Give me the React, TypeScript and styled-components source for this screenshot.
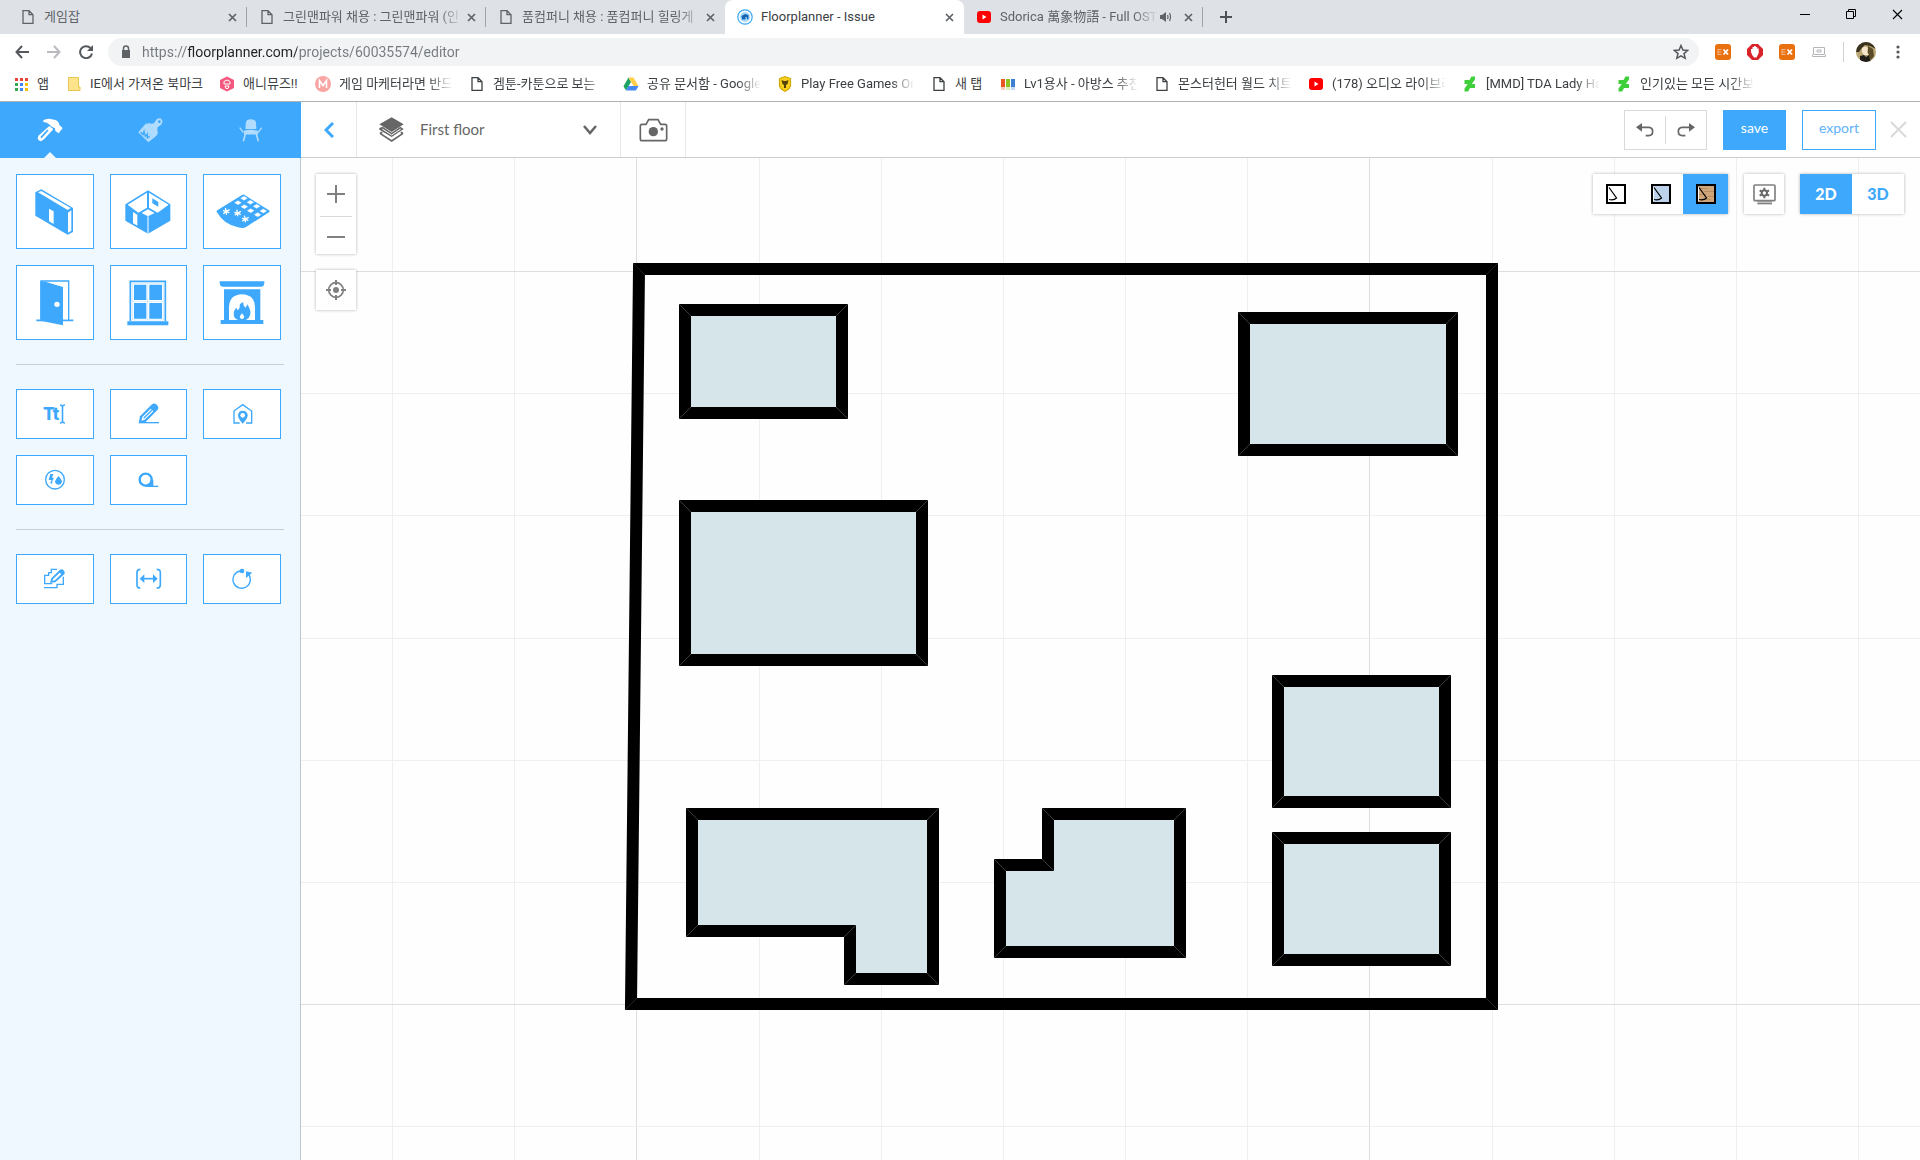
import React from "react";
import styled, { createGlobalStyle } from "styled-components";

const BLUE = "#3da8fc";
const UI_FONT = 'Roboto, "Noto Sans CJK KR", "Noto Sans CJK TC", sans-serif';
const APP_FONT = 'Lato, "Liberation Sans", sans-serif';

const GlobalStyle = createGlobalStyle`
  *, *::before, *::after { box-sizing: border-box; }
  body { margin: 0; background: #fff; font-family: ${UI_FONT}; }
  button, input, select { font: inherit; margin: 0; padding: 0; border: 0; background: none; color: inherit; }
  button, select { cursor: pointer; }
  svg { display: block; flex: none; }
`;

const Page = styled.div`
  display: flex;
  flex-direction: column;
  min-height: 100vh;
`;

/* ---------- browser chrome ---------- */

const TabStrip = styled.header`
  display: flex;
  height: 34px;
  padding-left: 8px;
  background: #dee1e6;
`;

const Tab = styled.div<{ $active?: boolean; $divider?: boolean }>`
  display: flex;
  align-items: center;
  flex: 0 1 239px;
  min-width: 0;
  height: 34px;
  padding: 0 7px 0 12px;
  font-size: 13px;
  color: ${(p) => (p.$active ? "#3c4043" : "#5f6368")};
  background: ${(p) => (p.$active ? "#fff" : "transparent")};
  border-radius: 8px 8px 0 0;
  background-image: ${(p) => (p.$divider ? "linear-gradient(#a0a3a8, #a0a3a8)" : "none")};
  background-size: 1px 20px;
  background-position: right center;
  background-repeat: no-repeat;
`;

const Favicon = styled.span`
  display: grid;
  place-items: center;
  flex: none;
  width: 16px;
  height: 16px;
`;

const Fading = styled.span<{ $fade?: boolean }>`
  flex: 1;
  min-width: 0;
  white-space: nowrap;
  line-height: 20px;
  mask-image: ${(p) => (p.$fade ? "linear-gradient(to left, transparent, #000 24px)" : "none")};
`;

const TabTitle = styled(Fading)`
  margin-left: 8px;
`;

const TabClose = styled.button`
  display: grid;
  place-items: center;
  flex: none;
  width: 16px;
  height: 16px;
  color: #5f6368;
  & + & { margin-left: 6px; }
`;

const NewTab = styled.button`
  display: grid;
  place-items: center;
  width: 46px;
  height: 34px;
  color: #4d5156;
`;

const WindowControls = styled.div`
  display: flex;
  margin-left: auto;
`;

const WindowButton = styled.button`
  display: grid;
  place-items: center;
  width: 46px;
  height: 28px;
  color: #000;
`;

const Toolbar = styled.nav`
  display: flex;
  align-items: center;
  height: 36px;
  padding: 0 6px;
`;

const NavButton = styled.button<{ $muted?: boolean }>`
  display: grid;
  place-items: center;
  flex: none;
  width: 32px;
  height: 32px;
  color: ${(p) => (p.$muted ? "#b8babd" : "#55595e")};
`;

const AddressBar = styled.div`
  display: flex;
  align-items: center;
  flex: 1;
  height: 28px;
  margin: 0 8px 0 6px;
  padding: 0 2px 0 12px;
  border-radius: 14px;
  background: #f1f3f4;
  color: #5f6368;
`;

const AddressInput = styled.input`
  flex: 1;
  min-width: 0;
  height: 28px;
  margin-left: 10px;
  outline: 0;
  font-size: 14px;
  color: transparent;
  background: linear-gradient(to right, #75797e 46px, #202124 46px, #202124 155px, #75797e 155px);
  background-clip: text;
  -webkit-background-clip: text;
`;

const ToolbarDivider = styled.span`
  width: 1px;
  height: 20px;
  margin: 0 6px 0 8px;
  background: #cfd1d4;
`;

const Bookmarks = styled.nav`
  display: flex;
  align-items: center;
  gap: 16px;
  height: 32px;
  padding: 0 12px 4px 13px;
  border-bottom: 1px solid #b0b2b4;
`;

const Bookmark = styled.a<{ $width: number }>`
  display: flex;
  align-items: center;
  gap: 8px;
  flex: 0 1 ${(p) => p.$width + 24}px;
  min-width: 0;
  color: #3c4043;
  font-size: 13px;
  text-decoration: none;
`;

/* ---------- application ---------- */

const AppShell = styled.div`
  display: flex;
  flex: 1;
`;

const Sidebar = styled.aside`
  display: flex;
  flex-direction: column;
  flex: none;
  width: 301px;
  background: #eff7ff;
`;

const SidebarTabs = styled.div`
  display: grid;
  grid-template-columns: repeat(3, 1fr);
  height: 56px;
  background: ${BLUE};
`;

const SidebarTab = styled.button<{ $active?: boolean }>`
  display: grid;
  place-items: center;
  position: relative;
  color: ${(p) => (p.$active ? "#fff" : "#b1dcfe")};
  &::after {
    content: "";
    display: ${(p) => (p.$active ? "block" : "none")};
    position: absolute;
    bottom: 0;
    left: calc(50% - 6px);
    border: 6px solid transparent;
    border-top: 0;
    border-bottom-color: #eff7ff;
  }
`;

const SidebarBody = styled.div`
  display: flex;
  flex-direction: column;
  gap: 24px;
  flex: 1;
  padding: 16px;
  border-right: 1px solid #bcc4cc;
`;

const ToolGrid = styled.div`
  display: grid;
  grid-template-columns: repeat(3, 1fr);
  gap: 16px;
  padding-right: 3px;
`;

const Tool = styled.button<{ $large?: boolean }>`
  display: grid;
  place-items: center;
  height: ${(p) => (p.$large ? 75 : 50)}px;
  border: 1px solid ${BLUE};
  background: #fff;
  color: ${BLUE};
`;

const Rule = styled.hr`
  width: 100%;
  height: 1px;
  margin: 0;
  border: 0;
  background: #c6ced6;
`;

const Main = styled.main`
  display: flex;
  flex-direction: column;
  flex: 1;
  min-width: 0;
`;

const TopBar = styled.div`
  display: flex;
  align-items: center;
  height: 56px;
  padding-right: 8px;
  border-bottom: 1px solid #cfcfcf;
  font-family: ${APP_FONT};
  background: #fff;
`;

const TopCell = styled.button<{ $width: number }>`
  display: grid;
  place-items: center;
  width: ${(p) => p.$width}px;
  height: 55px;
  border-right: 1px solid #e8e8e8;
  color: #666;
`;

const FloorPicker = styled.label`
  display: grid;
  grid-template-columns: 25px 1fr 16px;
  align-items: center;
  column-gap: 16px;
  width: 264px;
  height: 55px;
  padding: 0 22px;
  border-right: 1px solid #e8e8e8;
  color: #666;
`;

const FloorSelect = styled.select`
  grid-column: 2 / 4;
  grid-row: 1;
  height: 40px;
  padding-bottom: 2px;
  appearance: none;
  outline: 0;
  font-size: 15px;
  color: #666;
`;

const Chevron = styled.svg`
  grid-column: 3;
  grid-row: 1;
  pointer-events: none;
`;

const Actions = styled.div`
  display: flex;
  align-items: center;
  gap: 16px;
  margin-left: auto;
`;

const History = styled.div`
  display: flex;
  align-items: center;
  width: 83px;
  height: 40px;
  border: 1px solid #d9d9d9;
  color: #666;
`;

const HistoryButton = styled.button`
  display: grid;
  place-items: center;
  flex: 1;
  height: 28px;
  & + & { border-left: 1px solid #d9d9d9; }
`;

const ActionButton = styled.button<{ $width: number; $primary?: boolean }>`
  width: ${(p) => p.$width}px;
  height: 40px;
  padding-bottom: 4px;
  border: 1px solid ${BLUE};
  background: ${(p) => (p.$primary ? BLUE : "#fff")};
  color: ${(p) => (p.$primary ? "#fff" : "#62b2fb")};
  font-size: 14px;
  line-height: 20px;
`;

const CloseButton = styled.button`
  display: grid;
  place-items: center;
  width: 28px;
  height: 40px;
  margin-left: -8px;
  color: #d9d9d9;
`;

const Canvas = styled.section`
  position: relative;
  flex: 1;
  overflow: hidden;
  background: #fefefe;
`;

const Plan = styled.svg`
  position: absolute;
  inset: 0;
  width: 100%;
  height: 100%;
`;

const Overlay = styled.div`
  display: flex;
  justify-content: space-between;
  align-items: flex-start;
  position: relative;
  padding: 16px 16px 0 15px;
  font-family: ${APP_FONT};
`;

const Stack = styled.div`
  display: flex;
  flex-direction: column;
  gap: 16px;
`;

const Row = styled.div`
  display: flex;
  gap: 16px;
`;

const Panel = styled.div<{ $vertical?: boolean }>`
  display: flex;
  flex-direction: ${(p) => (p.$vertical ? "column" : "row")};
  align-items: center;
  gap: ${(p) => (p.$vertical ? 2 : 0)}px;
  background: #fff;
  box-shadow: 0 0 3px rgba(0, 0, 0, 0.3);
`;

const PanelButton = styled.button<{ $width?: number; $active?: boolean }>`
  display: grid;
  place-items: center;
  width: ${(p) => p.$width ?? 40}px;
  height: 40px;
  background: ${(p) => (p.$active ? BLUE : "#fff")};
  color: #808080;
`;

const ZoomButton = styled(PanelButton)`
  & + & {
    width: 32px;
    height: 38px;
    padding-top: 2px;
    border-top: 1px solid #d9d9d9;
  }
`;

const DimensionButton = styled(PanelButton)`
  color: ${(p) => (p.$active ? "#fff" : BLUE)};
  padding-bottom: 2px;
  font-size: 16px;
  font-weight: 900;
`;

/* ---------- icons ---------- */

/* Artwork is drawn on a grid of three units to the pixel. */
type ArtProps = { box: [number, number, number, number]; children: React.ReactNode };
const Art = ({ box, children }: ArtProps) => (
  <svg
    width={Math.round(box[2] / 3)}
    height={Math.round(box[3] / 3)}
    viewBox={box.join(" ")}
    fill="currentColor"
    aria-hidden="true"
  >
    {children}
  </svg>
);

const line = (width: number) => ({ fill: "none", stroke: "currentColor", strokeWidth: width });

const Cross = ({ size, weight }: { size: number; weight: number }) => (
  <svg width={size} height={size} viewBox={`0 0 ${size} ${size}`} {...line(weight)} aria-hidden="true">
    <path d={`M1 1 L${size - 1} ${size - 1} M${size - 1} 1 L1 ${size - 1}`} />
  </svg>
);

const DocIcon = () => (
  <svg width="12" height="16" viewBox="0 0 12 16" {...line(1.3)} aria-hidden="true">
    <path d="M1 1.7 H7 L11 5.7 V14.3 H1 Z M7 1.7 V5.7 H11" />
  </svg>
);

const YoutubeIcon = () => (
  <svg width="16" height="14" viewBox="0 0 16 14" aria-hidden="true">
    <rect x="1" y="1" width="14" height="12" rx="3" fill="#f00" />
    <path d="M6.5 4.5 L10.5 7 L6.5 9.5Z" fill="#fff" />
  </svg>
);

const FloorplannerIcon = () => (
  <svg width="16" height="16" viewBox="0 0 16 16" aria-hidden="true">
    <circle cx="8" cy="8" r="7.2" fill="#fff" stroke="#35a5f5" strokeWidth="1.2" />
    <circle cx="8" cy="8" r="5" fill="#a9d8fb" />
    <path d="M4.5 7 L8 5 L11.5 6 V10 L10 10.5 V8.5 L8.5 8 V10.5 H5Z" fill="#1465b4" />
  </svg>
);

const AppsIcon = () => {
  const colors = ["#ea4335", "#ea4335", "#ea4335", "#34a853", "#4285f4", "#fbbc05", "#34a853", "#4285f4", "#fbbc05"];
  return (
    <svg width="16" height="14" viewBox="0 0 16 14" aria-hidden="true">
      {colors.map((c, i) => (
        <rect key={i} x={2 + (i % 3) * 5} y={1 + Math.floor(i / 3) * 5} width="3" height="3" fill={c} />
      ))}
    </svg>
  );
};

const FolderIcon = () => (
  <svg width="14" height="16" viewBox="0 0 14 16" aria-hidden="true">
    <path d="M1.5 1.5 H11.5 V11 H13 V14.5 H1.5Z" fill="#fde38b" stroke="#e9c64d" />
  </svg>
);

const AnimuseIcon = () => (
  <svg width="16" height="16" viewBox="0 0 16 16" aria-hidden="true">
    <path d="M8 0.5 L15 4 V12 L8 15.5 L1 12 V4Z" fill="#f4587e" />
    <path d="M5 5.5 Q8 2.5 11 5.5 V8 H5Z M6 10 H10 L9 12.5 H7Z" fill="none" stroke="#fff" />
  </svg>
);

const MIcon = () => (
  <svg width="16" height="16" viewBox="0 0 16 16" aria-hidden="true">
    <circle cx="8" cy="8" r="8" fill="#f9a5a3" />
    <path d="M4.5 12 V4.5 L8 9.5 L11.5 4.5 V12" fill="none" stroke="#fff" strokeWidth="1.6" />
  </svg>
);

const DriveIcon = () => (
  <svg width="16" height="14" viewBox="0 0 16 14" aria-hidden="true">
    <path d="M5.5 0.5 L8 5 L3 13.5 L0.5 9.2Z" fill="#1da362" />
    <path d="M5.5 0.5 H10.5 L15.5 9 H10.5Z" fill="#ffcf48" />
    <path d="M5.5 9 H15.5 L13 13.5 H3Z" fill="#4587f4" />
  </svg>
);

const ShieldIcon = () => (
  <svg width="14" height="16" viewBox="0 0 14 16" aria-hidden="true">
    <path d="M7 0.6 L12.6 2.5 V10 Q12 13.5 7 15.5 Q2 13.5 1.4 10 V2.5Z" fill="#f7cf1c" stroke="#c9a100" />
    <path d="M3.5 4 L6 5 H8 L10.5 4 L9.5 8 L8 9 V12 H6 V9 L4.5 8Z" fill="#54440a" />
  </svg>
);

const BarsIcon = () => (
  <svg width="14" height="14" viewBox="0 0 14 14" aria-hidden="true">
    <path d="M0 2 H4 V10 H0Z" fill="#ea5520" />
    <path d="M5 2 H9 V10 H5Z" fill="#8fc31f" />
    <path d="M10 2 H14 V10 H10Z" fill="#3d7fd0" />
    <path d="M0 10 H4 V13 H0Z" fill="#f8cdbc" />
    <path d="M5 10 H9 V13 H5Z" fill="#ddedbc" />
    <path d="M10 10 H14 V13 H10Z" fill="#c5d9f1" />
  </svg>
);

const DeviantIcon = () => (
  <svg width="12" height="16" viewBox="0 0 12 16" aria-hidden="true">
    <path d="M11 0.5 V3.5 L7.8 8 H11 V12 H6 L4.2 15.5 H0.5 V12.5 L3.8 8 H0.5 V4 H5.5 L7.5 0.5Z" fill="#3fcf3a" />
  </svg>
);

const SpeakerIcon = () => (
  <svg width="12" height="10" viewBox="0 0 12 10" aria-hidden="true" fill="currentColor">
    <path d="M0 3 H2 L6 0 V10 L2 7 H0Z" />
    <path d="M7.5 3 Q8.5 5 7.5 7 M9.5 1 Q11.5 5 9.5 9" {...line(1.2)} />
  </svg>
);

const ExtensionIcon = () => (
  <svg width="16" height="16" viewBox="0 0 16 16" aria-hidden="true">
    <rect width="16" height="16" rx="3" fill="#e8700f" />
    <path d="M3 5.5 H6.5 M3 8 H6.5 M3 10.5 H6.5 M3 5 V11" fill="none" stroke="#f3b98a" />
    <path d="M8.5 5.5 L13 10.5 M13 5.5 L8.5 10.5" fill="none" stroke="#fff" strokeWidth="1.8" />
  </svg>
);

const BlockIcon = () => (
  <svg width="16" height="16" viewBox="0 0 16 16" aria-hidden="true">
    <path d="M5 0 H11 L16 5 V11 L11 16 H5 L0 11 V5Z" fill="#d9232b" />
    <path d="M4 8 V5 H5.5 V3 H7 V2 H8.7 V3 H10.2 V4.5 H11.7 V9 L9.5 13.5 H7 Q5 11.5 4 8Z" fill="#fff" />
  </svg>
);

const LaptopIcon = () => (
  <svg width="14" height="12" viewBox="0 0 14 12" {...line(1)} aria-hidden="true" color="#b4b6b9">
    <path d="M1.5 1.5 H12.5 V8.5 H1.5Z M0.5 10.5 H13.5 M5 4 H9 V6 H5Z M0.5 8.5 V10.5 M13.5 8.5 V10.5" />
  </svg>
);

const Avatar = () => (
  <svg width="20" height="20" viewBox="0 0 20 20" aria-hidden="true">
    <clipPath id="avatar-clip"><circle cx="10" cy="10" r="10" /></clipPath>
    <g clipPath="url(#avatar-clip)">
      <rect width="20" height="20" fill="#b9a672" />
      <path d="M0 0 H20 V7 L14 4 L9 3 L5 7 L3 10 L0 10Z" fill="#3a3220" />
      <path d="M12 4 L17 7 L18 14 L15 18 L12 12Z" fill="#5c4b28" />
      <path d="M6 6 Q9 3 12 6 L11 10 L13 13 L8 13 L6 10Z" fill="#f6e6cd" />
      <path d="M4 20 L4 14 L8 13 L10 15 L13 13 L15 20Z" fill="#201c18" />
    </g>
  </svg>
);

const HammerIcon = () => (
  <Art box={[112, 54, 78, 72]}>
    <path d="M131 61 Q140 55 152 57 L168 60 Q178 65 179 75 L189 84 L177 100 L167 93 L166 85 L156 80 L150 74 Q143 66 131 66Z" />
    <path d="M149 78 L161 88 L133 118 Q124 127 117 121 Q111 114 118 106Z" />
    <path d="M145 90 L124 113" fill="none" stroke={BLUE} strokeWidth="5" />
  </Art>
);

const BrushIcon = () => (
  <Art box={[415, 53, 75, 75]}>
    <path d="M429 80 L440 69 L474 102 L462 114Z" />
    <path d="M445 68 Q457 72 463 69 L471 57 Q480 50 487 58 Q491 66 484 73 L474 81 Q471 91 476 97 L471 101 L443 72Z" />
    <path d="M429 80 L462 113 L446 126 L416 96Z" />
    <path d="M423 95 L430 103 L433 93 L437 108 L443 101 L443 113 L450 108" fill="none" stroke={BLUE} strokeWidth="4" />
    <circle cx="479" cy="64" r="4" fill={BLUE} />
  </Art>
);

const ChairIcon = () => (
  <Art box={[716, 56, 72, 69]}>
    <path d="M735 86 L737 65 Q739 57 751 57 Q764 57 767 65 L768 86Z" />
    <path d="M729 92 Q751 85 774 92 L772 101 H732Z" />
    <path d="M718 82 L729 96 M784 82 L774 96" {...line(4)} />
    <path d="M735 101 L729 123 M768 101 L774 123" {...line(5)} />
    <path d="M731 100 H772" {...line(5)} />
  </Art>
);

const WallIcon = () => (
  <Art box={[105, 265, 120, 138]}>
    <path d="M106 275 L124 266 L219 322 V394 L203 402 L106 345Z" />
    <path d="M114 275 L124 271 L212 322 L203 328Z M204 336 L214 329 V390 L204 396Z M147 324 L161 332 V370 L147 362Z" fill="#fff" />
  </Art>
);

const RoomIcon = () => (
  <Art box={[377, 268, 138, 132]}>
    <path d="M446 269 L513 311 V360 L446 399 L378 360 V311Z" />
    <path d="M443 276 V321 L417 336 L385 312Z M449 276 V321 L475 336 L508 312Z M446 326 L466 337 L446 347 L427 337Z M401 334 L414 342 V375 L401 368Z" fill="#fff" />
    <path d="M446 347 V400" fill="none" stroke="#fff" strokeWidth="3" />
    <path d="M459 293 L477 304 V318 L459 308Z" />
  </Art>
);

const TILES = [[732, 297], [751, 309], [770, 321], [790, 335], [714, 310], [733, 322], [752, 334], [773, 346]];
const LEAVES = [[679, 336], [713, 341], [736, 359]];

const FloorIcon = () => (
  <Art box={[645, 284, 165, 105]}>
    <path d="M726 287 Q730 284 734 287 L807 333 Q811 336 807 339 L738 383 Q730 388 714 384 Q672 376 651 339 Q648 336 652 333Z" />
    {TILES.map(([x, y]) => (
      <path key={`${x}-${y}`} d={`M${x} ${y - 6} l10 6 l-10 6 l-10 -6Z`} fill="#fff" stroke="#fff" strokeLinejoin="round" />
    ))}
    {LEAVES.map(([x, y]) => (
      <path
        key={x}
        d={`M${x - 9} ${y + 7} L${x} ${y} L${x - 3} ${y - 10} M${x} ${y} L${x + 10} ${y - 5} M${x - 10} ${y - 2} L${x} ${y} L${x + 9} ${y + 5} M${x} ${y} V${y + 10}`}
        fill="none"
        stroke="#fff"
        strokeWidth="4"
      />
    ))}
  </Art>
);

const DoorIcon = () => (
  <Art box={[107, 539, 114, 138]}>
    <path d="M122 658 V542 H205 V660" {...line(4)} />
    <path d="M108 660 H219" {...line(5)} />
    <path d="M120 543 L138 545 L188 560 V675 L120 661Z" />
    <path d="M190 559 L148 547 H202 V657 H190Z" fill="#fff" />
    <circle cx="170" cy="612" r="8" fill="#fff" />
  </Art>
);

const WindowIcon = () => (
  <Art box={[383, 539, 126, 138]}>
    <path d="M393 662 V543 H498 V662" {...line(5)} />
    <path d="M384 663 H507 V675 H384Z" />
    <path d="M404 553 H441 V599 H404Z M450 553 H488 V599 H450Z M404 608 H441 V655 H404Z M450 608 H488 V655 H450Z" />
    <path d="M400 549 H492 V659 H400Z M400 603 H492 M445 549 V659" {...line(1)} opacity="0.6" />
  </Art>
);

const FireplaceIcon = () => (
  <Art box={[658, 542, 138, 132]}>
    <path d="M660 543 H794 V547 Q793 559 785 559 H670 Q661 559 660 547Z" />
    <path d="M673 567 H782 V659 H791 V671 H663 V659 H673Z" />
    <path d="M688 659 V620 Q690 583 727 582 Q764 583 766 620 V659Z" fill="#fff" />
    <path d="M731 605 Q729 616 738 622 L743 612 Q756 633 751 645 Q748 656 738 660 H717 Q702 655 702 642 Q702 629 710 622 L714 630 Q722 624 720 613 Q724 607 731 605Z" />
    <path d="M727 639 Q735 648 733 652 Q727 660 721 652 Q719 648 727 639Z" fill="#fff" />
  </Art>
);

const TextIcon = () => (
  <svg width="24" height="20" viewBox="0 0 24 20" fill="currentColor" aria-hidden="true">
    <text x="0" y="16" fontFamily="Inter, sans-serif" fontSize="17" fontWeight="800">Tt</text>
    <path d="M17 1 Q19.5 1 19.5 3 Q19.5 1 22 1 M17 19 Q19.5 19 19.5 17 Q19.5 19 22 19 M19.5 2 V18" {...line(1.6)} />
  </svg>
);

const PencilIcon = () => (
  <Art box={[411, 160, 69, 66]}>
    <path d="M416 221 L420 200 L456 164 Q464 159 470 165 Q478 173 473 180 L437 217Z" />
    <path d="M424 213 L427 202 L452 177 L460 185 L434 210Z" fill="#fff" />
    <path d="M431 206 L456 181" {...line(4)} />
    <path d="M417 219 H477" {...line(4)} />
  </Art>
);

const HousePinIcon = () => (
  <Art box={[695, 160, 63, 66]}>
    <path d="M718 220 H701 V184 L727 165 L754 184 V220 H737" {...line(4)} />
    <path d="M727 222 Q713 207 713 197 Q714 183 727 183 Q741 183 742 197 Q742 207 727 222Z" />
    <circle cx="727" cy="197" r="7" fill="#fff" />
  </Art>
);

const UtilitiesIcon = () => (
  <Art box={[130, 358, 66, 66]}>
    <circle cx="163" cy="390" r="28" {...line(4)} />
    <path d="M149 373 H158 L154 384 H160 L151 402 L152 391 H144Z M148 396 L156 396 L152 404Z" />
    <path d="M173 379 Q184 391 184 396 Q182 405 173 405 Q163 404 163 395 Q165 390 173 379Z" />
  </Art>
);

const TapeIcon = () => (
  <Art box={[411, 360, 69, 60]}>
    <circle cx="437" cy="389" r="18" {...line(7)} />
    <path d="M452 389 H460 V411 H437 Q451 405 452 389Z" />
    <path d="M437 409 H475" {...line(4)} />
  </Art>
);

const EditPlanIcon = () => (
  <Art box={[130, 655, 69, 66]}>
    <path d="M172 659 H155 V669 H147 V677 H135 V702 H158 M133 714 H172 V704 H191 V681" {...line(4)} />
    <path d="M151 699 L155 686 L180 661 Q187 656 193 663 Q198 670 192 675 L167 698Z" />
    <path d="M158 693 L161 687 L180 669 L185 673 L166 692Z" fill="#fff" />
  </Art>
);

const WidthIcon = () => (
  <Art box={[405, 655, 81, 66]}>
    <path d="M421 659 Q411 659 411 668 V705 Q411 715 421 715 M470 659 Q481 659 481 668 V705 Q481 715 470 715" {...line(5)} />
    <path d="M428 687 H464" {...line(5)} />
    <path d="M419 687 L433 674 V700Z M473 687 L459 674 V700Z" />
  </Art>
);

const RotateIcon = () => (
  <Art box={[695, 655, 63, 66]}>
    <path d="M720 664 A26 26 0 1 0 742 671" {...line(4)} />
    <circle cx="725" cy="664" r="7" />
    <path d="M737 665 L756 669 L737 685Z" />
  </Art>
);

const LayersIcon = () => (
  <Art box={[236, 50, 75, 78]}>
    <path d="M274 51 L310 72 L274 95 L237 72Z" />
    <path d="M237 83 L247 79 L274 97 L300 79 L310 86 L274 110 L237 88Z" />
    <path d="M246 86 L274 104 L301 86" fill="none" stroke="#fff" strokeWidth="3" />
    <path d="M239 99 L274 122 L308 99 M246 96 L239 99 M301 96 L308 99" {...line(5)} />
  </Art>
);

const CameraIcon = () => (
  <Art box={[1016, 58, 87, 72]}>
    <path d="M1025 77 H1037 L1045 63 H1073 L1081 77 H1094 Q1099 77 1099 82 V120 Q1099 126 1093 126 H1025 Q1020 126 1020 120 V82 Q1020 77 1025 77Z" {...line(5)} />
    <circle cx="1059" cy="99" r="14" />
    <circle cx="1085" cy="91" r="5" />
  </Art>
);

const UndoIcon = () => (
  <Art box={[229, 67, 54, 45]}>
    <path d="M229 83 L247 70 V96Z" />
    <path d="M245 83 H268 Q279 84 279 95 Q279 108 267 108 H258" {...line(5)} />
  </Art>
);

const RedoIcon = () => (
  <Art box={[350, 67, 54, 45]}>
    <path d="M404 83 L386 70 V96Z" />
    <path d="M388 83 H365 Q354 84 354 95 Q354 108 366 108 H375" {...line(5)} />
  </Art>
);

const TargetIcon = () => (
  <Art box={[78, 540, 60, 60]}>
    <circle cx="108" cy="570" r="22" {...line(5)} />
    <circle cx="108" cy="570" r="9" />
    <path d="M108 540 V555 M108 585 V600 M78 570 H93 M123 570 H138" {...line(6)} />
  </Art>
);

const DisplaySettingsIcon = () => (
  <Art box={[578, 250, 69, 63]}>
    <rect x="581" y="253" width="63" height="47" rx="3" {...line(5)} />
    <path d="M591 301 H635 V305 H591Z" opacity="0.6" />
    <path d="M591 306 H635 V311 H591Z" />
    <circle cx="612" cy="277" r="8" fill="none" stroke="#666" strokeWidth="6" />
    <path d="M612 261 V267 M612 287 V293 M598 269 L603 272 M621 282 L626 285 M598 285 L603 282 M621 272 L626 269" fill="none" stroke="#666" strokeWidth="6" />
  </Art>
);

const RoomStyleIcon = ({ fill, grain }: { fill: string; grain?: boolean }) => (
  <svg width="20" height="20" viewBox="0 0 20 20" fill="none" stroke="#000" aria-hidden="true">
    <rect x="1" y="1" width="18" height="18" fill={fill} strokeWidth="2" />
    {grain && <path d="M3 4.5 H12 M8 7.5 H18 M3 10.5 H10 M12 12.5 H18 M4 15.5 H15" stroke="#b98f62" />}
    <path d="M2.5 3 V17" stroke="#fff" />
    <path d="M3 3.5 L10.5 14 Q8 16.5 3 15.5" strokeWidth="1.2" />
  </svg>
);

/* ---------- data ---------- */

const TABS = [
  { title: "게임잡", icon: <DocIcon />, divider: true },
  { title: "그린맨파워 채용 : 그린맨파워 (인", icon: <DocIcon />, divider: true, fade: true },
  { title: "품컴퍼니 채용 : 품컴퍼니 힐링게", icon: <DocIcon />, fade: true },
  { title: "Floorplanner - Issue", icon: <FloorplannerIcon />, active: true },
  { title: "Sdorica 萬象物語 - Full OST", icon: <YoutubeIcon />, divider: true, fade: true, audio: true },
];

const BOOKMARKS = [
  { label: "앱", width: 13, icon: <AppsIcon /> },
  { label: "IE에서 가져온 북마크", width: 113, icon: <FolderIcon /> },
  { label: "애니뮤즈!!", width: 56, icon: <AnimuseIcon /> },
  { label: "게임 마케터라면 반드", width: 114, icon: <MIcon />, fade: true },
  { label: "겜툰-카툰으로 보는 ", width: 114, icon: <DocIcon />, fade: true },
  { label: "공유 문서함 - Google", width: 114, icon: <DriveIcon />, fade: true },
  { label: "Play Free Games Onl", width: 114, icon: <ShieldIcon />, fade: true },
  { label: "새 탭", width: 29, icon: <DocIcon /> },
  { label: "Lv1용사 - 아방스 추천", width: 114, icon: <BarsIcon />, fade: true },
  { label: "몬스터헌터 월드 치트", width: 114, icon: <DocIcon />, fade: true },
  { label: "(178) 오디오 라이브러", width: 114, icon: <YoutubeIcon />, fade: true },
  { label: "[MMD] TDA Lady Ha", width: 114, icon: <DeviantIcon />, fade: true },
  { label: "인기있는 모든 시간보", width: 114, icon: <DeviantIcon />, fade: true },
];

const BUILD_TOOLS = [
  { name: "Draw wall", icon: <WallIcon /> },
  { name: "Draw room", icon: <RoomIcon /> },
  { name: "Draw surface", icon: <FloorIcon /> },
  { name: "Place doors", icon: <DoorIcon /> },
  { name: "Place windows", icon: <WindowIcon /> },
  { name: "Place structurals", icon: <FireplaceIcon /> },
];

const MARKUP_TOOLS = [
  { name: "Add text", icon: <TextIcon /> },
  { name: "Draw line", icon: <PencilIcon /> },
  { name: "Place signs", icon: <HousePinIcon /> },
  { name: "Utilities", icon: <UtilitiesIcon /> },
  { name: "Measure", icon: <TapeIcon /> },
];

const FLOOR_TOOLS = [
  { name: "Edit floor drawing", icon: <EditPlanIcon /> },
  { name: "Scale floor", icon: <WidthIcon /> },
  { name: "Rotate floor", icon: <RotateIcon /> },
];

/* Plan geometry, measured from the top-left corner of the canvas. */
type Point = [number, number];
const WALL = 12;
const rect = (x1: number, y1: number, x2: number, y2: number): Point[] => [[x1, y1], [x2, y1], [x2, y2], [x1, y2]];

const ROOMS: Point[][] = [
  rect(384, 152, 541, 255),
  rect(384, 348, 621, 502),
  rect(943, 160, 1151, 292),
  rect(977, 523, 1144, 644),
  rect(977, 680, 1144, 802),
  [[391, 656], [632, 656], [632, 821], [549, 821], [549, 773], [391, 773]],
  [[747, 656], [879, 656], [879, 794], [699, 794], [699, 707], [747, 707]],
];
const OUTER: Point[] = [[338, 111], [1191, 111], [1191, 846], [330, 846]];

/* Thin joints where two wall segments meet, one per corner. */
const joints = (points: Point[]) =>
  points
    .map(([x, y], i) => {
      const prev = points[(i + points.length - 1) % points.length];
      const next = points[(i + 1) % points.length];
      const dx = Math.sign(Math.round((prev[0] + next[0] - 2 * x) / 20));
      const dy = Math.sign(Math.round((prev[1] + next[1] - 2 * y) / 20));
      const h = WALL / 2;
      return `M${x - dx * h} ${y - dy * h} L${x + dx * h} ${y + dy * h}`;
    })
    .join(" ");

const toPoints = (points: Point[]) => points.map((p) => p.join(",")).join(" ");
const GRID_X = Array.from({ length: 20 }, (_, i) => Math.round(91 + (i * 733) / 6));
const GRID_Y = Array.from({ length: 12 }, (_, i) => Math.round(113 + (i * 733) / 6));
const gridColor = (major: boolean) => (major ? "#dedede" : "#efefef");

const FloorPlan = () => (
  <Plan role="img" aria-label="First floor plan">
    {GRID_X.map((x, i) => (
      <rect key={`x${x}`} x={x} y="0" width="1" height="100%" fill={gridColor(i % 6 === 2)} />
    ))}
    {GRID_Y.map((y, i) => (
      <rect key={`y${y}`} x="0" y={y} width="100%" height="1" fill={gridColor(i % 6 === 0)} />
    ))}
    <polygon points={toPoints(OUTER)} fill="none" stroke="#000" strokeWidth={WALL} />
    <path d={joints(OUTER)} stroke="#444" strokeWidth="0.5" />
    {ROOMS.map((room, i) => (
      <g key={i}>
        <polygon points={toPoints(room)} fill="#d6e5ea" stroke="#000" strokeWidth={WALL} />
        <path d={joints(room)} stroke="#777" strokeWidth="0.5" />
      </g>
    ))}
  </Plan>
);

export default function App() {
  return (
    <Page>
      <GlobalStyle />
      <TabStrip>
        {TABS.map((tab) => (
          <Tab key={tab.title} $active={tab.active} $divider={tab.divider}>
            <Favicon>{tab.icon}</Favicon>
            <TabTitle $fade={tab.fade}>{tab.title}</TabTitle>
            {tab.audio && (
              <TabClose aria-label="Mute tab"><SpeakerIcon /></TabClose>
            )}
            <TabClose aria-label="Close tab"><Cross size={9} weight={1.7} /></TabClose>
          </Tab>
        ))}
        <NewTab aria-label="New tab">
          <svg width="12" height="12" viewBox="0 0 12 12" {...line(2)}><path d="M6 0 V12 M0 6 H12" /></svg>
        </NewTab>
        <WindowControls>
          <WindowButton aria-label="Minimize">
            <svg width="10" height="10" viewBox="0 0 10 10" {...line(1)}><path d="M0 5.5 H10" /></svg>
          </WindowButton>
          <WindowButton aria-label="Restore">
            <svg width="10" height="10" viewBox="0 0 10 10" {...line(1)}><path d="M0.5 2.5 H7.5 V9.5 H0.5Z M2.5 2.5 V0.5 H9.5 V7.5 H7.5" /></svg>
          </WindowButton>
          <WindowButton aria-label="Close"><Cross size={11} weight={1.1} /></WindowButton>
        </WindowControls>
      </TabStrip>

      <Toolbar aria-label="Browser toolbar">
        <NavButton aria-label="Back">
          <svg width="14" height="14" viewBox="0 0 14 14" {...line(2)}><path d="M14 7 H1.5 M7 1 L1.5 7 L7 13" /></svg>
        </NavButton>
        <NavButton aria-label="Forward" $muted>
          <svg width="14" height="14" viewBox="0 0 14 14" {...line(2)}><path d="M0 7 H12.5 M7 1 L12.5 7 L7 13" /></svg>
        </NavButton>
        <NavButton aria-label="Reload">
          <svg width="14" height="14" viewBox="0 0 14 14" {...line(2)}>
            <path d="M11.5 3 A6 6 0 1 0 13 8.5" />
            <path d="M14 0 V6 H8Z" fill="currentColor" stroke="none" />
          </svg>
        </NavButton>
        <AddressBar>
          <svg width="12" height="14" viewBox="0 0 12 14" fill="currentColor" aria-hidden="true">
            <path d="M2 5 H10 V13 H2Z" />
            <path d="M3.5 6 V3.5 Q3.5 1 6 1 Q8.5 1 8.5 3.5 V6" {...line(1.5)} />
          </svg>
          <AddressInput aria-label="Address" defaultValue="https://floorplanner.com/projects/60035574/editor" />
          <NavButton aria-label="Bookmark this page">
            <svg width="16" height="16" viewBox="0 0 16 16" {...line(1.5)}>
              <path d="M8 1.5 L9.9 6 L14.7 6.4 L11 9.6 L12.2 14.3 L8 11.8 L3.8 14.3 L5 9.6 L1.3 6.4 L6.1 6Z" />
            </svg>
          </NavButton>
        </AddressBar>
        <NavButton aria-label="Extension"><ExtensionIcon /></NavButton>
        <NavButton aria-label="Ad blocker"><BlockIcon /></NavButton>
        <NavButton aria-label="Extension"><ExtensionIcon /></NavButton>
        <NavButton aria-label="Remote desktop"><LaptopIcon /></NavButton>
        <ToolbarDivider />
        <NavButton aria-label="Profile"><Avatar /></NavButton>
        <NavButton aria-label="Menu">
          <svg width="4" height="14" viewBox="0 0 4 14" fill="currentColor">
            <circle cx="2" cy="2" r="1.6" /><circle cx="2" cy="7" r="1.6" /><circle cx="2" cy="12" r="1.6" />
          </svg>
        </NavButton>
      </Toolbar>

      <Bookmarks aria-label="Bookmarks">
        {BOOKMARKS.map((b) => (
          <Bookmark key={b.label} href="#" $width={b.width}>
            <Favicon>{b.icon}</Favicon>
            <Fading $fade={b.fade}>{b.label}</Fading>
          </Bookmark>
        ))}
      </Bookmarks>

      <AppShell>
        <Sidebar>
          <SidebarTabs>
            <SidebarTab aria-label="Build" $active><HammerIcon /></SidebarTab>
            <SidebarTab aria-label="Decorate"><BrushIcon /></SidebarTab>
            <SidebarTab aria-label="Furnish"><ChairIcon /></SidebarTab>
          </SidebarTabs>
          <SidebarBody>
            <ToolGrid>
              {BUILD_TOOLS.map((t) => <Tool key={t.name} aria-label={t.name} $large>{t.icon}</Tool>)}
            </ToolGrid>
            <Rule />
            <ToolGrid>
              {MARKUP_TOOLS.map((t) => <Tool key={t.name} aria-label={t.name}>{t.icon}</Tool>)}
            </ToolGrid>
            <Rule />
            <ToolGrid>
              {FLOOR_TOOLS.map((t) => <Tool key={t.name} aria-label={t.name}>{t.icon}</Tool>)}
            </ToolGrid>
          </SidebarBody>
        </Sidebar>

        <Main>
          <TopBar>
            <TopCell aria-label="Back to projects" $width={56}>
              <svg width="10" height="16" viewBox="0 0 10 16" fill="none" stroke={BLUE} strokeWidth="3"><path d="M9 1 L2 8 L9 15" /></svg>
            </TopCell>
            <FloorPicker>
              <LayersIcon />
              <FloorSelect aria-label="Floor" defaultValue="First floor">
                <option>First floor</option>
              </FloorSelect>
              <Chevron width="16" height="10" viewBox="0 0 16 10" {...line(2.5)} aria-hidden="true">
                <path d="M2 1 L8 8 L14 1" />
              </Chevron>
            </FloorPicker>
            <TopCell aria-label="Camera" $width={65}><CameraIcon /></TopCell>
            <Actions>
              <History>
                <HistoryButton aria-label="Undo"><UndoIcon /></HistoryButton>
                <HistoryButton aria-label="Redo"><RedoIcon /></HistoryButton>
              </History>
              <ActionButton $width={63} $primary>save</ActionButton>
              <ActionButton $width={74}>export</ActionButton>
              <CloseButton aria-label="Close editor"><Cross size={17} weight={2} /></CloseButton>
            </Actions>
          </TopBar>

          <Canvas>
            <FloorPlan />
            <Overlay>
              <Stack>
                <Panel $vertical>
                  <ZoomButton aria-label="Zoom in">
                    <svg width="18" height="18" viewBox="0 0 18 18" {...line(2)}><path d="M9 0 V18 M0 9 H18" /></svg>
                  </ZoomButton>
                  <ZoomButton aria-label="Zoom out">
                    <svg width="18" height="18" viewBox="0 0 18 18" {...line(2)}><path d="M0 9 H18" /></svg>
                  </ZoomButton>
                </Panel>
                <Panel>
                  <PanelButton aria-label="Center plan"><TargetIcon /></PanelButton>
                </Panel>
              </Stack>
              <Row>
                <Panel>
                  <PanelButton aria-label="Outline view" $width={45}><RoomStyleIcon fill="#fff" /></PanelButton>
                  <PanelButton aria-label="Colored view" $width={45}><RoomStyleIcon fill="#bdd3ec" /></PanelButton>
                  <PanelButton aria-label="Textured view" $width={45} $active><RoomStyleIcon fill="#cfa679" grain /></PanelButton>
                </Panel>
                <Panel>
                  <PanelButton aria-label="View settings"><DisplaySettingsIcon /></PanelButton>
                </Panel>
                <Panel>
                  <DimensionButton $width={52} $active>2D</DimensionButton>
                  <DimensionButton $width={52}>3D</DimensionButton>
                </Panel>
              </Row>
            </Overlay>
          </Canvas>
        </Main>
      </AppShell>
    </Page>
  );
}
